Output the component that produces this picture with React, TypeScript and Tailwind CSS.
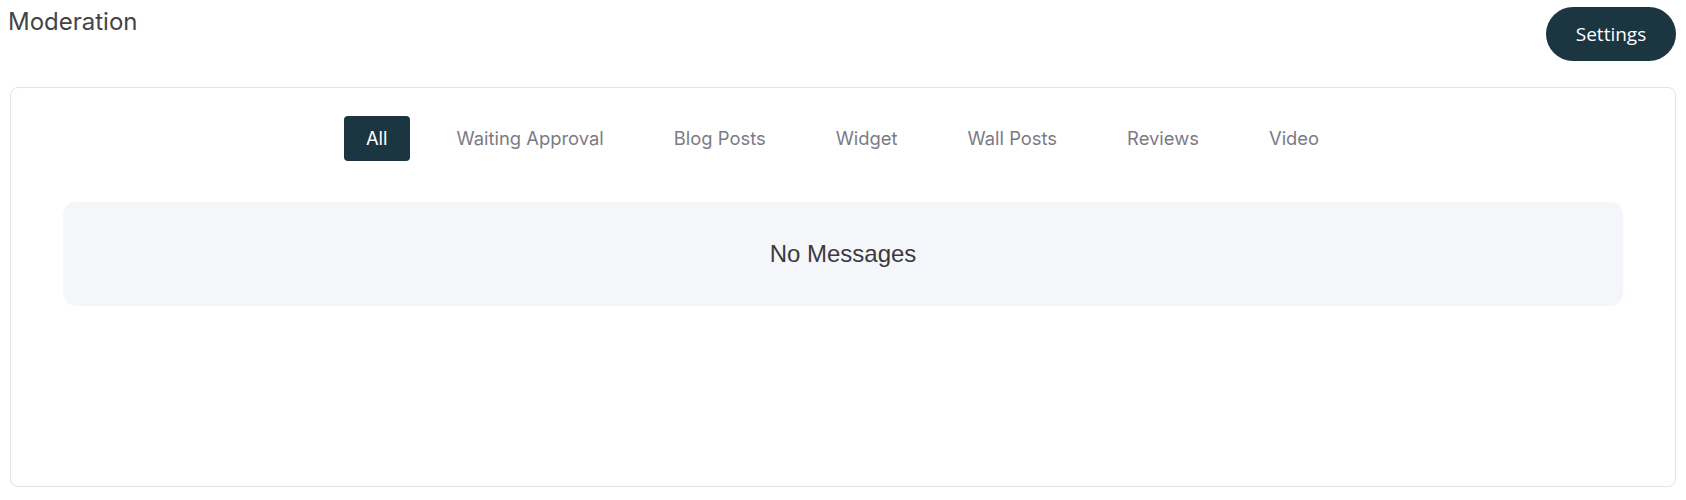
import React from 'react';

const tabs = ['All', 'Waiting Approval', 'Blog Posts', 'Widget', 'Wall Posts', 'Reviews', 'Video'];

const App: React.FC = () => {
  const active = 'All';
  return (
    <div className="min-h-[500px] bg-white px-[10px] pt-[7px] font-['Inter',sans-serif]">
      <div className="flex items-start justify-between">
        <h1 className="-ml-[2px] pt-[3px] text-[24px] leading-[24px] font-normal text-[#444448]">Moderation</h1>
        <button className="h-[54px] w-[130px] rounded-full bg-[#1b3541] font-['Open_Sans',sans-serif] text-[19px] text-white">
          Settings
        </button>
      </div>

      <div className="mt-[26px] h-[400px] rounded-lg border border-[#e2e2ea] px-[52px] pt-[28px]">
        <div className="flex items-center justify-center gap-[24px]">
          {tabs.map((tab) => (
            <button
              key={tab}
              className={
                tab === active
                  ? 'h-[45px] rounded-[4px] bg-[#1b3541] px-[22px] pt-px text-[18.4px] text-white'
                  : 'h-[45px] px-[23px] pt-px text-[18.4px] text-[#7b7b86]'
              }
            >
              {tab}
            </button>
          ))}
        </div>

        <div className="mt-[41px] flex h-[104px] items-center justify-center rounded-[13px] bg-[#f5f6fa]">
          <p className="font-['Liberation_Sans',Arial,sans-serif] text-[24px] text-[#3a3a3d]">No Messages</p>
        </div>
      </div>
    </div>
  );
};

export default App;
